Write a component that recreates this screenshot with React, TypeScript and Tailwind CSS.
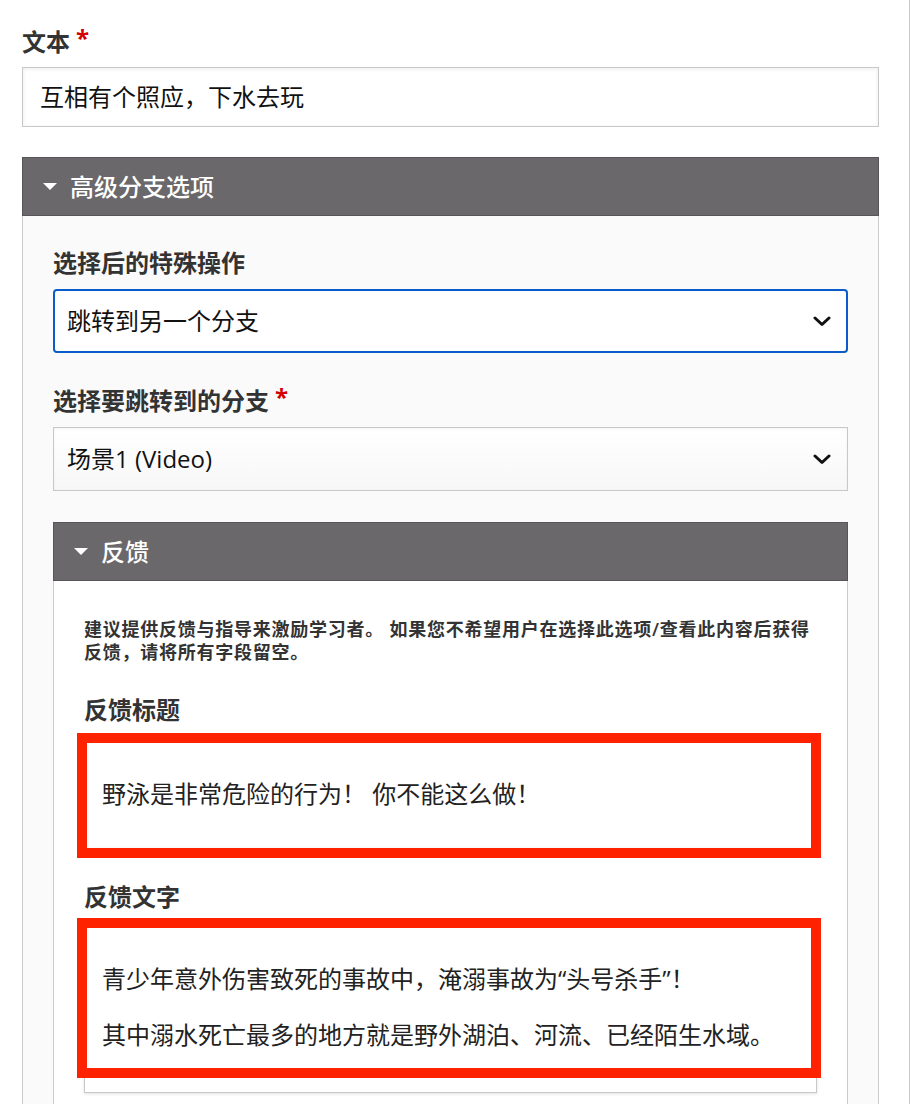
import React from "react";

const FONT = { fontFamily: '"Open Sans", "Noto Sans CJK SC", sans-serif' };

function Caret() {
  return (
    <svg width="14" height="7" viewBox="0 0 14 7" className="shrink-0">
      <polygon points="0,0 14,0 7,7" fill="#ffffff" />
    </svg>
  );
}

function Chevron() {
  return (
    <svg width="18" height="11" viewBox="0 0 18 11" className="shrink-0">
      <polyline points="2,2 9,8.5 16,2" fill="none" stroke="#111" strokeWidth="3" strokeLinecap="round" strokeLinejoin="round" />
    </svg>
  );
}

function Star() {
  return <span className="ml-[6px] text-[#d40000] font-bold relative top-[-4px]">*</span>;
}

export default function App() {
  return (
    <div className="w-[918px] h-[1104px] overflow-hidden bg-white flex" style={FONT}>
      <div className="w-[909px] shrink-0 pl-[22px] pt-[27px]">
        <div className="w-[857px]">
          {/* 文本 */}
          <div className="text-[24px] leading-[30px] font-bold text-[#333] mb-[10px]">
            文本<Star />
          </div>
          <div className="h-[60px] border border-[#c8c8c8] bg-white shadow-[inset_0_1px_4px_rgba(0,0,0,0.08)] flex items-center px-[17px] text-[24px] text-[#111]">
            互相有个照应，下水去玩
          </div>

          {/* 高级分支选项 */}
          <div className="mt-[30px]">
            <div className="h-[59px] bg-[#6a686b] border border-[#575558] flex items-center pl-[20px] gap-[13px] text-white text-[24px] font-medium">
              <Caret />
              <span>高级分支选项</span>
            </div>
            <div className="bg-[#fafafa] border-x border-[#cccccc] px-[30px] pt-[32px] pb-[40px]">
              <div className="text-[24px] leading-[30px] font-bold text-[#333] mb-[11px]">选择后的特殊操作</div>
              <div className="h-[64px] border-2 border-[#0b5ccb] rounded-[4px] bg-white flex items-center justify-between pl-[12px] pr-[15px] text-[24px] text-[#111]">
                <span>跳转到另一个分支</span>
                <Chevron />
              </div>

              <div className="mt-[33px] text-[24px] leading-[30px] font-bold text-[#333] mb-[11px]">
                选择要跳转到的分支<Star />
              </div>
              <div className="h-[64px] border border-[#c8c8c8] bg-gradient-to-b from-white to-[#f7f7f7] shadow-[inset_0_1px_3px_rgba(0,0,0,0.05)] flex items-center justify-between pl-[13px] pr-[16px] text-[24px] text-[#111]">
                <span>场景1 (Video)</span>
                <Chevron />
              </div>

              {/* 反馈 */}
              <div className="mt-[31px]">
                <div className="h-[59px] bg-[#6a686b] border border-[#575558] flex items-center pl-[20px] gap-[13px] text-white text-[24px] font-medium">
                  <Caret />
                  <span>反馈</span>
                </div>
                <div className="bg-white border-x border-[#cccccc] px-[30px] pt-[37px] pb-[40px]">
                  <p className="text-[18px] leading-[23px] font-semibold text-[#333] tracking-[0.75px]">
                    建议提供反馈与指导来激励学习者。 如果您不希望用户在选择此选项/查看此内容后获得
                    <br />
                    反馈，请将所有字段留空。
                  </p>

                  <div className="mt-[31px] text-[24px] leading-[30px] font-bold text-[#333] mb-[11px]">反馈标题</div>
                  <div className="relative">
                    <div className="h-[113px] border border-[#c8c8c8] bg-white shadow-[inset_0_1px_4px_rgba(0,0,0,0.08)] px-[17px] pt-[42px] text-[24px] leading-[30px] text-[#222]">
                      野泳是非常危险的行为！ 你不能这么做！
                    </div>
                    <div className="absolute left-[-7px] right-[-4px] top-[-3px] h-[125px] border-[10px] border-[#fe2200] pointer-events-none" />
                  </div>

                  <div className="mt-[33px] text-[24px] leading-[30px] font-bold text-[#333] mb-[11px]">反馈文字</div>
                  <div className="relative">
                    <div className="h-[170px] border border-[#c8c8c8] bg-white shadow-[0_1px_3px_rgba(0,0,0,0.12)] px-[17px] pt-[40px] text-[24px] leading-[30px] text-[#222]">
                      <p>青少年意外伤害致死的事故中，淹溺事故为“头号杀手”！</p>
                      <p className="mt-[26px]">其中溺水死亡最多的地方就是野外湖泊、河流、已经陌生水域。</p>
                    </div>
                    <div className="absolute left-[-7px] right-[-4px] top-[-5px] h-[160px] border-[10px] border-[#fe2200] pointer-events-none" />
                  </div>
                </div>
              </div>
            </div>
          </div>
        </div>
      </div>
      <div className="w-px shrink-0 bg-[#c8c8c8]" />
    </div>
  );
}
